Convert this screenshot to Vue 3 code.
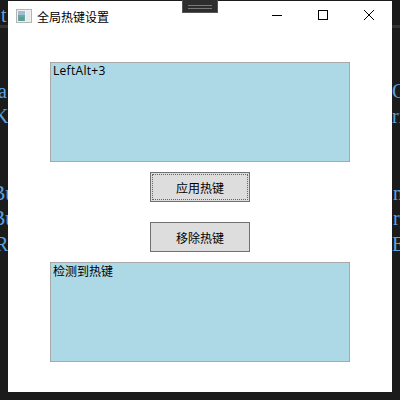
<template>
  <div class="desktop">
    <span
      v-for="item in backdrop"
      :key="item.text + item.y"
      class="desktop__text"
      :style="{ left: item.x + 'px', top: item.y + 'px' }"
    >{{ item.text }}</span>
    <div class="desktop__bar desktop__bar--left"></div>
    <div class="desktop__bar desktop__bar--right"></div>

    <div class="window">
      <div class="titlebar">
        <svg class="titlebar__icon" width="16" height="14" viewBox="0 0 16 14">
          <rect x="0.5" y="0.5" width="15" height="13" fill="#f0f0f0" stroke="#b4b4b4" />
          <rect x="2" y="2" width="7" height="10" fill="#6fa6ae" />
          <rect x="2" y="2" width="7" height="4" fill="#9dbdd2" />
          <rect x="3" y="8" width="5" height="4" fill="#5f9f82" />
          <rect x="10" y="2" width="4" height="10" fill="#e4ecea" />
        </svg>
        <span class="titlebar__title">全局热键设置</span>
        <div class="titlebar__controls">
          <svg width="46" height="30" viewBox="0 0 46 30">
            <path d="M18 14.5H28" stroke="#000" fill="none" />
          </svg>
          <svg width="46" height="30" viewBox="0 0 46 30">
            <rect x="18.5" y="9.5" width="9" height="9" stroke="#000" fill="none" />
          </svg>
          <svg width="46" height="30" viewBox="0 0 46 30">
            <path d="M18 9L28 19M28 9L18 19" stroke="#000" fill="none" />
          </svg>
        </div>
      </div>

      <div class="content">
        <div class="box box--top">LeftAlt+3</div>
        <button class="btn btn--focus" type="button"><span class="btn__focus">应用热键</span></button>
        <button class="btn" type="button">移除热键</button>
        <div class="box box--bottom">检测到热键</div>
      </div>
    </div>

    <div class="grip"><i></i><i></i></div>
  </div>
</template>

<script setup>
const backdrop = [
  { text: 't', x: 1, y: 4 },
  { text: 'a', x: -2, y: 80 },
  { text: 'K', x: -6, y: 105 },
  { text: 'Bu', x: -8, y: 182 },
  { text: 'Bu', x: -8, y: 207 },
  { text: 'R', x: -5, y: 233 },
  { text: 'C', x: 392, y: 80 },
  { text: 'ri', x: 392, y: 105 },
  { text: 'n', x: 393, y: 182 },
  { text: 'rg', x: 393, y: 207 },
  { text: 'E', x: 392, y: 233 }
]
</script>

<style>
html,
body {
  margin: 0;
  background: #1b1b1b;
}
</style>

<style scoped>
.desktop {
  position: relative;
  width: 400px;
  height: 400px;
  overflow: hidden;
  background: #1b1b1b;
}

.desktop__text {
  position: absolute;
  font-family: "Liberation Serif", serif;
  font-size: 20px;
  line-height: 23px;
  color: #5aa2e0;
}

.desktop__bar {
  position: absolute;
  top: 25px;
  width: 8px;
  height: 3px;
  background: #333;
}

.desktop__bar--left {
  left: 0;
}

.desktop__bar--right {
  right: 0;
}

.window {
  position: absolute;
  left: 8px;
  top: 1px;
  width: 384px;
  height: 391px;
  background: #fff;
  display: flex;
  flex-direction: column;
}

.titlebar {
  height: 30px;
  flex: none;
  display: flex;
  align-items: center;
  padding-left: 8px;
  font-family: "Noto Sans CJK SC", "Noto Sans", sans-serif;
  font-size: 12px;
  color: #000;
}

.titlebar__icon {
  flex: none;
  margin-right: 5px;
}

.titlebar__title {
  flex: 1;
}

.titlebar__controls {
  display: flex;
  flex: none;
}

.titlebar__controls svg {
  display: block;
}

.content {
  flex: 1;
  display: flex;
  flex-direction: column;
  align-items: center;
  padding-top: 31px;
  font-family: "Open Sans", "Noto Sans CJK SC", sans-serif;
  font-size: 12px;
  color: #000;
}

.box {
  box-sizing: border-box;
  width: 300px;
  height: 100px;
  padding: 0 2px;
  border: 1px solid #a9a9a9;
  background: #add8e6;
  line-height: 16px;
}

.box--top {
  letter-spacing: 0.3px;
}

.box--bottom {
  font-family: "Noto Sans CJK SC", sans-serif;
}

.btn {
  box-sizing: border-box;
  width: 100px;
  height: 30px;
  margin-top: 10px;
  padding: 0;
  border: 1px solid #707070;
  border-radius: 0;
  background: #ddd;
  color: #000;
  font-family: "Noto Sans CJK SC", sans-serif;
  font-size: 12px;
  display: flex;
  align-items: center;
  justify-content: center;
}

.btn + .btn {
  margin-top: 20px;
}

.btn + .box {
  margin-top: 10px;
}

.btn--focus {
  padding: 1px;
}

.btn__focus {
  flex: 1;
  align-self: stretch;
  display: flex;
  align-items: center;
  justify-content: center;
  border: 1px dotted #666;
}

.grip {
  position: absolute;
  left: 182px;
  top: -1px;
  box-sizing: border-box;
  width: 36px;
  height: 14px;
  padding-top: 5px;
  border: 1px solid #555;
  background: #2d2d2d;
}

.grip i {
  display: block;
  height: 1px;
  margin: 0 5px 2px;
  background: #777;
}
</style>
